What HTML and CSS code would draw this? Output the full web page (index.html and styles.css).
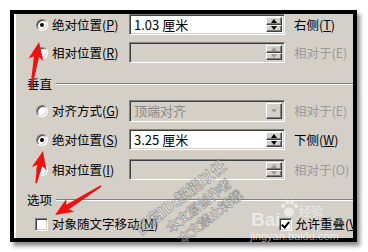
FILE: index.html
```html
<!DOCTYPE html>
<html>
<head>
<meta charset="utf-8">
<link rel="stylesheet" href="styles.css">
</head>
<body>
<div class="frame">
  <div class="panel">
    <div class="row r1">
      <span class="radio checked"></span>
      <span class="lbl">绝对位置(<u>P</u>)</span>
      <div class="field"><span class="val">1.03 厘米</span><div class="spin"><span class="btn up"></span><span class="btn down"></span></div></div>
      <span class="side">右侧(<u>T</u>)</span>
    </div>
    <div class="row r2">
      <span class="radio"></span>
      <span class="lbl">相对位置(<u>R</u>)</span>
      <div class="field off"><span class="val"></span><div class="spin"><span class="btn up"></span><span class="btn down"></span></div></div>
      <span class="side dim">相对于(E)</span>
    </div>
    <div class="group g1"><span class="gname">垂直</span><span class="rule"></span></div>
    <div class="row r4">
      <span class="radio"></span>
      <span class="lbl">对齐方式(<u>G</u>)</span>
      <div class="field off combo"><span class="val dimtext">顶端对齐</span><div class="drop"><span class="btn down"></span></div></div>
      <span class="side dim">相对于(E)</span>
    </div>
    <div class="row r5">
      <span class="radio checked"></span>
      <span class="lbl">绝对位置(<u>S</u>)</span>
      <div class="field"><span class="val">3.25 厘米</span><div class="spin"><span class="btn up"></span><span class="btn down"></span></div></div>
      <span class="side">下侧(<u>W</u>)</span>
    </div>
    <div class="row r6">
      <span class="radio"></span>
      <span class="lbl">相对位置(<u>I</u>)</span>
      <div class="field off"><span class="val"></span><div class="spin"><span class="btn up"></span><span class="btn down"></span></div></div>
      <span class="side dim">相对于(O)</span>
    </div>
    <div class="group g2"><span class="gname">选项</span><span class="rule"></span></div>
    <div class="row r8">
      <span class="check"></span>
      <span class="lbl wide">对象随文字移动(<u>M</u>)</span>
      <span class="check on"></span>
      <span class="lbl2">允许重叠(<u>V</u>)</span>
    </div>
  </div>
</div>
<svg class="overlay" width="368" height="252" viewBox="0 0 368 252">
  <g class="stamp" transform="translate(140 236) rotate(-38)">
    <text x="0" y="0" class="s1">百度ID:超能以任</text>
    <text x="26" y="17" class="s2">本文原创作者</text>
    <text x="28" y="33" class="s2">本文禁止转载</text>
  </g>
  <g class="baidu">
    <text x="251" y="226" class="bai">Bai</text>
    <g transform="translate(289 209)" fill="rgba(255,255,255,0.55)">
      <ellipse cx="0" cy="3" rx="5" ry="4.5"/>
      <ellipse cx="-6" cy="-3" rx="2" ry="2.6"/>
      <ellipse cx="-2" cy="-7" rx="2" ry="2.6"/>
      <ellipse cx="3" cy="-7" rx="2" ry="2.6"/>
      <ellipse cx="7" cy="-3" rx="2" ry="2.6"/>
    </g>
    <text x="299" y="216" class="jy">经验</text>
    <text x="250" y="240" class="url">jingyan.baidu.com</text>
  </g>
  <g fill="#ee1111">
    <polygon transform="translate(39 42) rotate(99.7)" points="0,0 18,-7.5 15,-2.6 47.7,-0.8 47.7,0.8 15,2.6 18,7.5"/>
    <polygon transform="translate(43 151) rotate(102.3)" points="0,0 18,-7.5 15,-2.6 32.8,-0.8 32.8,0.8 15,2.6 18,7.5"/>
    <polygon transform="translate(55 215) rotate(-32.2)" points="0,0 18,-7.5 15,-2.6 54.4,-0.8 54.4,0.8 15,2.6 18,7.5"/>
  </g>
</svg>
</body>
</html>
```
FILE: styles.css
```css
html, body {
  margin: 0;
  padding: 0;
  background: #fff;
}
body {
  width: 368px;
  height: 252px;
  overflow: hidden;
  position: relative;
  font-family: "Noto Sans CJK SC", "Liberation Sans", sans-serif;
  font-size: 12.5px;
  color: #000;
}
.frame {
  margin: 10px 0 0 10px;
  width: 347px;
  height: 232px;
  box-sizing: border-box;
  border: 4px solid #000;
  box-shadow: 3px 4px 4px rgba(0, 0, 0, 0.45);
  background: #d4d0c8;
  overflow: hidden;
}
.panel {
  height: 100%;
  border-left: 2px solid #fff;
  box-sizing: border-box;
}
.row {
  display: flex;
  align-items: center;
  padding-left: 20px;
}
.r1 { height: 21px; }
.r2 { height: 21px; margin-top: 7px; }
.r4 { height: 22px; margin-top: 8px; }
.r5 { height: 21px; margin-top: 7px; }
.r6 { height: 21px; margin-top: 9px; }
.r8 { height: 16px; margin-top: 8px; padding-left: 19px; }
.group {
  display: flex;
  align-items: center;
  height: 16px;
  padding-left: 11px;
}
.g1 { margin-top: 13px; }
.g2 { margin-top: 12px; }
.gname {
  line-height: 16px;
  width: 29px;
}
.rule {
  flex: 1;
  height: 0;
  border-top: 1px solid #808080;
  border-bottom: 1px solid #fff;
}
.radio {
  width: 12px;
  height: 12px;
  box-sizing: border-box;
  border-radius: 50%;
  background: #fff;
  border: 1px solid;
  border-color: #808080 #fff #fff #808080;
  box-shadow: inset 1px 1px #404040, inset -1px -1px #d4d0c8;
  display: flex;
  align-items: center;
  justify-content: center;
  flex: none;
}
.radio.checked::after {
  content: "";
  width: 4px;
  height: 4px;
  border-radius: 50%;
  background: #000;
}
.check {
  width: 13px;
  height: 13px;
  box-sizing: border-box;
  background: #fff;
  border: 1px solid;
  border-color: #808080 #fff #fff #808080;
  box-shadow: inset 1px 1px #404040, inset -1px -1px #d4d0c8;
  flex: none;
  position: relative;
}
.check.on::after {
  content: "";
  position: absolute;
  left: 3px;
  top: 1px;
  width: 3px;
  height: 6px;
  border: solid #000;
  border-width: 0 2px 2px 0;
  transform: rotate(40deg);
}
.lbl {
  margin-left: 4px;
  width: 77px;
  flex: none;
  white-space: nowrap;
  line-height: 16px;
}
.lbl.wide {
  width: 227px;
  margin-left: 4px;
}
.lbl2 {
  margin-left: 3px;
  white-space: nowrap;
  line-height: 16px;
}
u {
  text-decoration-thickness: 1px;
  text-underline-offset: 1px;
}
.field {
  width: 156px;
  height: 100%;
  box-sizing: border-box;
  background: #fff;
  border: 1px solid;
  border-color: #808080 #fff #fff #808080;
  box-shadow: inset 1px 1px #404040, inset -1px -1px #d4d0c8;
  display: flex;
  align-items: stretch;
  flex: none;
  padding: 2px;
}
.field.off {
  background: #d4d0c8;
}
.val {
  flex: 1;
  padding-left: 2px;
  line-height: 15px;
  font-size: 13px;
  white-space: nowrap;
}
.dimtext {
  color: #8a8a8a;
}
.spin {
  width: 16px;
  display: flex;
  flex-direction: column;
}
.drop {
  width: 16px;
  display: flex;
}
.btn {
  flex: 1;
  background: #d4d0c8;
  box-sizing: border-box;
  border: 1px solid;
  border-color: #fff #404040 #404040 #fff;
  box-shadow: inset -1px -1px #808080;
  display: flex;
  align-items: center;
  justify-content: center;
}
.btn::after {
  content: "";
  width: 0;
  height: 0;
  border-left: 3.5px solid transparent;
  border-right: 3.5px solid transparent;
}
.btn.up::after {
  border-bottom: 4px solid #000;
}
.btn.down::after {
  border-top: 4px solid #000;
}
.off .btn.up::after {
  border-bottom-color: #9a9a9a;
}
.off .btn.down::after {
  border-top-color: #9a9a9a;
}
.side {
  margin-left: 9px;
  white-space: nowrap;
  line-height: 16px;
}
.side.dim {
  color: #9a9a9a;
}
.overlay {
  position: absolute;
  left: 0;
  top: 0;
}
.stamp text {
  font-family: "Noto Sans CJK SC", sans-serif;
  font-weight: 700;
  fill: rgba(255, 255, 255, 0.35);
  stroke: rgba(90, 90, 90, 0.55);
  stroke-width: 0.7px;
}
.stamp .s1 { font-size: 15px; }
.stamp .s2 { font-size: 13px; }
.baidu .bai {
  font-family: "Liberation Sans", sans-serif;
  font-weight: 700;
  font-size: 19px;
  fill: rgba(255, 255, 255, 0.55);
}
.baidu .jy {
  font-family: "Noto Sans CJK SC", sans-serif;
  font-size: 12px;
  fill: rgba(255, 255, 255, 0.55);
}
.baidu .url {
  font-family: "Liberation Sans", sans-serif;
  font-size: 11px;
  fill: rgba(255, 255, 255, 0.6);
}
```
